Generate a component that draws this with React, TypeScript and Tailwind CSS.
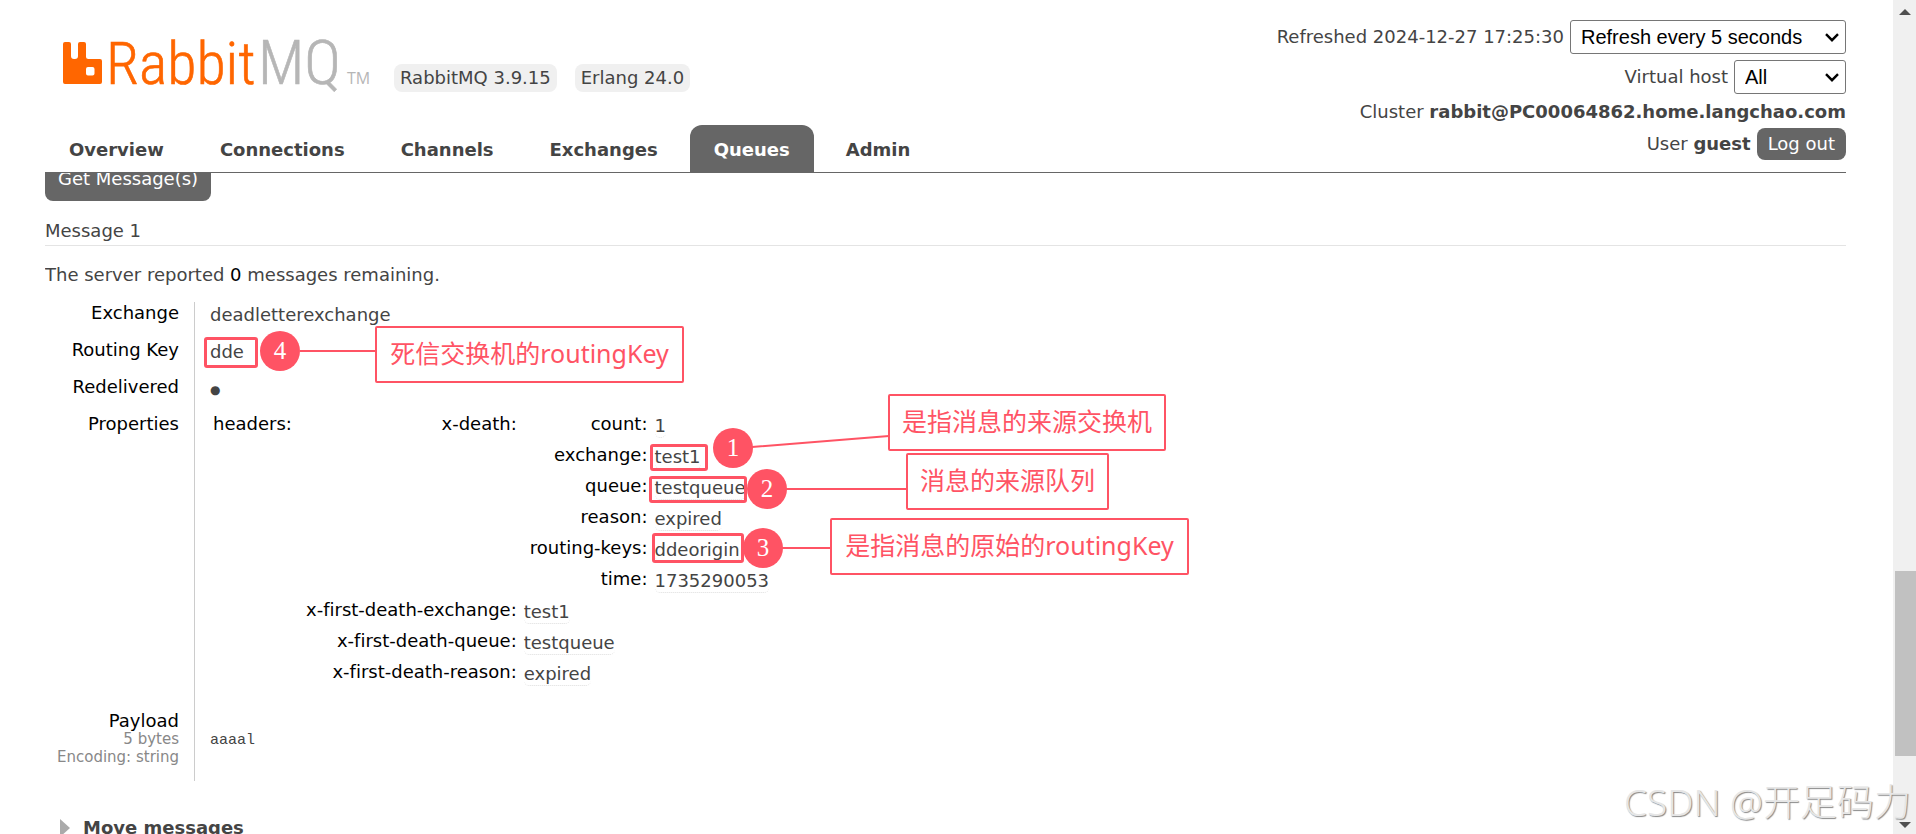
import type { ReactNode } from "react";
import clsx from "clsx";

const tabs = ["Overview", "Connections", "Channels", "Exchanges", "Queues", "Admin"];

const deathFields = [
  { name: "count", value: "1" },
  { name: "exchange", value: "test1" },
  { name: "queue", value: "testqueue" },
  { name: "reason", value: "expired" },
  { name: "routing-keys", value: "ddeorigin" },
  { name: "time", value: "1735290053" },
];

const firstDeathFields = [
  { name: "x-first-death-exchange", value: "test1" },
  { name: "x-first-death-queue", value: "testqueue" },
  { name: "x-first-death-reason", value: "expired" },
];

function Logo() {
  return (
    <a href="#" aria-label="RabbitMQ" className="flex items-end">
      <svg viewBox="0 0 39 42" className="h-[42px] w-[39px]" fill="#ff6600">
        <path
          fillRule="evenodd"
          d="M2 0H6Q8 0 8 2V14Q8 17 11 17H12Q15 17 15 14V2Q15 0 17 0H21Q23 0 23 2V14.500Q23 17 25.500 17H37Q39 17 39 19V40Q39 42 37 42H2Q0 42 0 40V2Q0 0 2 0ZM25 25Q23 25 23 27V31.500Q23 33.500 25 33.500H29.500Q31.500 33.500 31.500 31.500V27Q31.500 25 29.500 25Z"
        />
      </svg>
      <svg
        viewBox="0 0 270 80"
        className="-mb-5 h-20 w-[270px]"
        fontFamily="'Roboto Condensed', Roboto, sans-serif"
        fontWeight="300"
        fontSize="60"
      >
        <text x="4" y="60" fill="#ff6600" stroke="#ff6600" strokeWidth="0.6">Rabbit</text>
        <text x="156" y="60" fill="#b6b6b6" stroke="#b6b6b6" strokeWidth="0.6" fontSize="62">MQ</text>
        <text x="245" y="60" fill="#b6b6b6" fontSize="16" fontWeight="400" fontFamily="'Open Sans', sans-serif">TM</text>
      </svg>
    </a>
  );
}

function Select({ id, label, className }: { id: string; label: string; className: string }) {
  return (
    <span className={clsx("relative inline-flex", className)}>
      <select
        id={id}
        className="h-[34px] w-full appearance-none rounded-[3px] border border-[#767676] bg-white pl-[10px] font-['Liberation_Sans',sans-serif] text-[20px] leading-6 text-black"
      >
        <option>{label}</option>
      </select>
      <svg viewBox="0 0 14 9" className="pointer-events-none absolute top-[13px] right-[7px] h-[9px] w-[14px]" fill="none" stroke="#000" strokeWidth="2.4">
        <path d="M1 1.200L7 7.200L13 1.200" />
      </svg>
    </span>
  );
}

function Row({ label, children }: { label: ReactNode; children: ReactNode }) {
  return (
    <tr>
      <th className="w-[150px] border-r border-[#cccccc] pr-[15px] pb-[15px] text-right align-top font-normal text-black">{label}</th>
      <td className="pt-[2px] pl-[15px] align-top">{children}</td>
    </tr>
  );
}

function Field({ name, value }: { name: string; value: string }) {
  return (
    <tr className="h-[31px]">
      <th className="pr-[7px] text-right align-top font-normal text-black">{name}:</th>
      <td className="pt-[2px] align-top">
        <abbr title={value} className="inline-block rounded-[5px] border-b border-dotted border-[#dddddd] no-underline">{value}</abbr>
      </td>
    </tr>
  );
}

function Mark({ className }: { className: string }) {
  return <span className={clsx("absolute rounded-[3px] border-[3px] border-[#ff5364]", className)} />;
}

function Pin({ n, className }: { n: number; className: string }) {
  return (
    <span className={clsx("absolute flex size-10 items-center justify-center rounded-full bg-[#ff5364] font-['Liberation_Serif',serif] text-[25px] leading-6 text-white", className)}>
      {n}
    </span>
  );
}

function Note({ text, className }: { text: string; className: string }) {
  return (
    <span className={clsx("absolute flex h-[57px] items-center justify-center rounded-[2px] border-2 border-[#ff5364] bg-white pb-1 font-['Noto_Sans','Noto_Sans_CJK_SC',sans-serif] text-[25px] leading-8 whitespace-nowrap text-[#ff5364]", className)}>
      {text}
    </span>
  );
}

export default function App() {
  return (
    <div className="flex h-screen overflow-hidden bg-white font-['DejaVu_Sans',sans-serif] text-[18px] leading-[22px] text-[#444444] [font-variant-ligatures:none]">
      <div className="flex min-w-0 flex-1 flex-col pr-[47px] pl-[45px]">
        {/* Header */}
        <header className="flex h-[173px] shrink-0 justify-between border-b border-[#666666]">
          <div className="flex flex-col justify-between">
            <div className="flex items-end pt-6 pl-[18px]">
              <Logo />
              <div className="-mb-2 ml-[22px] flex gap-[18px]">
                <span className="rounded-lg bg-[#f0f0f0] px-[6px] py-[3px]">RabbitMQ 3.9.15</span>
                <span className="rounded-lg bg-[#f0f0f0] px-[6px] py-[3px]">Erlang 24.0</span>
              </div>
            </div>
            <nav className="flex gap-2 font-bold">
              {tabs.map((tab) => (
                <a
                  key={tab}
                  href="#"
                  className={clsx("rounded-t-xl px-6 pt-[14px] pb-[11px]", tab === "Queues" && "bg-[#666666] text-white")}
                >
                  {tab}
                </a>
              ))}
            </nav>
          </div>

          <div className="flex flex-col items-end pt-5">
            <div className="flex items-center gap-[6px]">
              <label htmlFor="refresh">Refreshed 2024-12-27 17:25:30</label>
              <Select id="refresh" label="Refresh every 5 seconds" className="w-[276px]" />
            </div>
            <div className="mt-[6px] flex items-center gap-[6px]">
              <label htmlFor="vhost">Virtual host</label>
              <Select id="vhost" label="All" className="w-28" />
            </div>
            <p className="mt-[7px]">
              Cluster <b>rabbit@PC00064862.home.langchao.com</b>
            </p>
            <div className="mt-[5px] flex items-center gap-[6px]">
              <span>
                User <b>guest</b>
              </span>
              <button className="rounded-lg bg-[#666666] px-[11px] pt-[5px] pb-[5px] text-white">Log out</button>
            </div>
          </div>
        </header>

        {/* Scrolled queue page */}
        <main className="min-h-0 flex-1 overflow-hidden">
          <div className="relative -mt-[9px]">
            <button className="rounded-lg bg-[#666666] px-[13px] pt-1 pb-[11px] text-white">Get Message(s)</button>

            <h3 className="mt-[19px] border-b border-[#e4e4e4] pb-[3px]">Message 1</h3>
            <p className="mt-[18px]">
              The server reported <span className="text-black">0</span> messages remaining.
            </p>

            <table className="mt-4 border-separate border-spacing-0">
              <tbody>
                <Row label="Exchange">deadletterexchange</Row>
                <Row label="Routing Key">dde</Row>
                <Row label="Redelivered">
                  <span className="block text-xs leading-6">●</span>
                </Row>
                <Row label="Properties">
                  <div className="-mt-[2px] flex pb-[18px] pl-[3px]">
                    <span className="w-[93px] text-black">headers:</span>
                    <table className="border-separate border-spacing-0">
                      <tbody>
                        <tr>
                          <th className="pr-[7px] text-right align-top font-normal text-black">x-death:</th>
                          <td className="pl-[6px]">
                            <table className="border-separate border-spacing-0">
                              <tbody>
                                {deathFields.map((field) => (
                                  <Field key={field.name} {...field} />
                                ))}
                              </tbody>
                            </table>
                          </td>
                        </tr>
                        {firstDeathFields.map((field) => (
                          <Field key={field.name} {...field} />
                        ))}
                      </tbody>
                    </table>
                  </div>
                </Row>
                <Row
                  label={
                    <>
                      Payload
                      <div className="-mt-[2px] text-[15px] leading-[18px] text-[#888888]">
                        5 bytes
                        <br />
                        Encoding: string
                      </div>
                    </>
                  }
                >
                  <pre className="pt-[18px] font-['Liberation_Mono',monospace] text-[15px]">aaaal</pre>
                </Row>
              </tbody>
            </table>

            <h2 className="mt-9 flex items-center gap-[13px] pl-[15px] font-bold">
              <svg viewBox="0 0 10 18" className="h-[18px] w-[10px]" fill="#aaaaaa">
                <path d="M0 0L10 9L0 18Z" />
              </svg>
              Move messages
            </h2>

            {/* Annotations over the message */}
            <div className="pointer-events-none absolute top-0 left-0">
              <svg className="absolute top-0 left-0 h-[420px] w-[900px]" stroke="#ff5364" strokeWidth="2">
                <path d="M255 187H331M707 283L844 272M740 325H861M736 384H786" />
              </svg>
              <Mark className="top-[173px] left-[159px] h-[31px] w-[54px]" />
              <Mark className="top-[280px] left-[605px] h-[27px] w-[58px]" />
              <Mark className="top-[312px] left-[604px] h-[27px] w-[98px]" />
              <Mark className="top-[369px] left-[607px] h-[30px] w-[92px]" />
              <Pin n={4} className="top-[167px] left-[215px]" />
              <Pin n={1} className="top-[264px] left-[668px]" />
              <Pin n={2} className="top-[305px] left-[702px]" />
              <Pin n={3} className="top-[364px] left-[698px]" />
              <Note text="死信交换机的routingKey" className="top-[162px] left-[330px] w-[309px]" />
              <Note text="是指消息的来源交换机" className="top-[230px] left-[843px] w-[278px]" />
              <Note text="消息的来源队列" className="top-[289px] left-[861px] w-[203px]" />
              <Note text="是指消息的原始的routingKey" className="top-[354px] left-[785px] w-[359px]" />
            </div>
          </div>
        </main>
      </div>

      {/* Scrollbar */}
      <div className="flex w-[23px] shrink-0 flex-col items-center justify-between bg-[#f0f0f0] pt-[9px] pb-[6px]">
        <svg viewBox="0 0 12 6" className="h-[6px] w-3" fill="#505050">
          <path d="M0 6L6 0L12 6Z" />
        </svg>
        <span className="mt-[556px] mb-[66px] ml-[2px] w-[21px] flex-1 bg-[#c1c1c1]" />
        <svg viewBox="0 0 12 6" className="h-[6px] w-3" fill="#505050">
          <path d="M0 0L6 6L12 0Z" />
        </svg>
      </div>

      <p className="absolute right-[5px] bottom-2 font-['Noto_Sans','Noto_Sans_CJK_SC',sans-serif] text-[37px] leading-[48px] font-light text-[#e6e6e6] [text-shadow:1px_1px_1px_#888888]">
        CSDN @开足码力
      </p>
    </div>
  );
}
